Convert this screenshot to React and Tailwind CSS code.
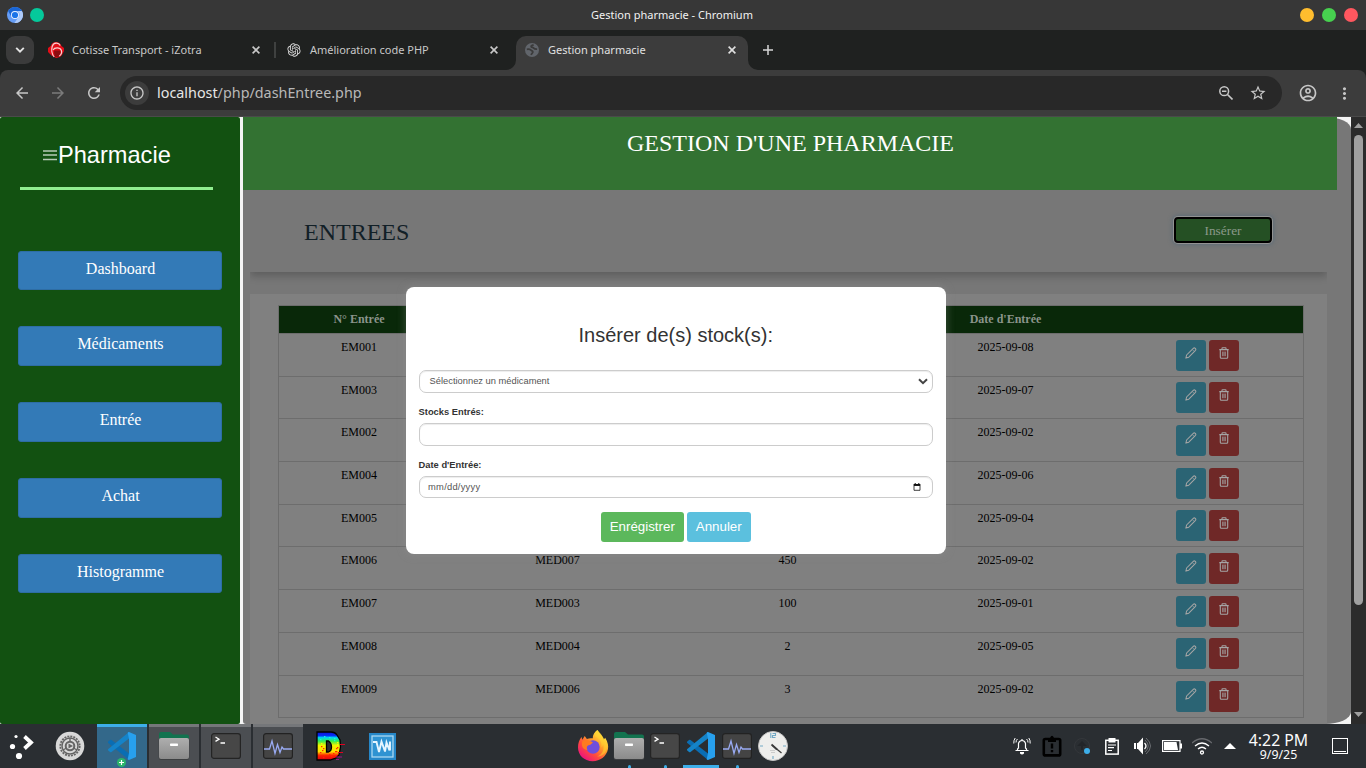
import React from "react";
import {
  MdArrowBack, MdArrowForward, MdRefresh, MdInfoOutline, MdStarBorder,
  MdOutlineAccountCircle, MdMoreVert,
} from "react-icons/md";
import { RiOpenaiFill } from "react-icons/ri";

const sans = "font-['Liberation_Sans',sans-serif]";
const serif = "font-['Liberation_Serif',serif]";

function ChromiumIcon() {
  return (
    <svg width="16" height="16" viewBox="0 0 16 16">
      <circle cx="8" cy="8" r="8" fill="#669df6" />
      <path d="M1.1 4A8 8 0 0 1 14.9 4H8a4 4 0 0 0-3.8 2.8L4 9Z" fill="#1a66d6" />
      <path d="M14.9 4A8 8 0 0 1 7.5 16l4-6A4 4 0 0 0 10.500 4Z" fill="#aecbfa" />
      <circle cx="8" cy="8" r="4" fill="#e8f0fe" />
      <circle cx="8" cy="8" r="3.1" fill="#1a73e8" />
    </svg>
  );
}

function CotisseIcon() {
  return (
    <svg width="16" height="16" viewBox="0 0 16 16">
      <path d="M8 0C5.500 0 3.500 1.500 2.700 4L0 6v4l3.500 3.500L8 16c3-.3 5.500-1.500 6.200-3.500L16 9V6l-2.500-2C12.500 1.500 10.500 0 8 0Z" fill="#e30d17" />
      <path d="M6 8.500h6.500v4L10 15H6.500Z" fill="#8c0c10" />
      <path d="M12.200 3.500C10.500 0 5.500.3 4.200 4.500c-.9 3.500-.4 7.500 2 10.500" fill="none" stroke="#f8cfcf" strokeWidth="1.200" />
      <path d="M5 8c1.500-2.800 7-3 8.300.3.900 2.500-.3 4.500-2 5.700" fill="none" stroke="#f8cfcf" strokeWidth="1.200" />
    </svg>
  );
}

function GlobeIcon() {
  return (
    <svg width="14" height="14" viewBox="0 0 14 14">
      <circle cx="7" cy="7" r="7" fill="#61656b" />
      <path d="M1.800 6.300c2-.3 3.200-.1 4.200.9.900.9 1.700.5 1.900 1.600.1 1.300-1.300 1.500-1.900 3.100M8.600 1.600C7.500 2.600 6 2.300 6.100 3.600c.2 1.100 1.600.5 2.300 1.300.8.900 1.800 1.300 3.700 1.200" fill="none" stroke="#3b3b3b" strokeWidth="1.700" />
    </svg>
  );
}

function Cross({ className }) {
  return (
    <svg width="8" height="8" viewBox="0 0 8 8" className={className}>
      <path d="m.6.6 6.800 6.800M7.400.6.6 7.400" stroke="currentColor" strokeWidth="1.600" />
    </svg>
  );
}

function TitleBar() {
  return (
    <div className="flex h-[30px] items-center bg-[#373737] px-[7px]">
      <div className="flex w-[98px] items-center gap-[7px]">
        <ChromiumIcon />
        <div className="size-3.5 rounded-full bg-[#05c99b]" />
      </div>
      <div className="flex-1 text-center text-[11px] text-[#f2f2f2]">Gestion pharmacie - Chromium</div>
      <div className="flex w-[120px] justify-end gap-2 pr-px">
        <div className="size-3.5 rounded-full bg-[#ffbd2e]" />
        <div className="size-3.5 rounded-full bg-[#47d14f]" />
        <div className="size-3.5 rounded-full bg-[#ff575f]" />
      </div>
    </div>
  );
}

function Tabs() {
  return (
    <div className="flex h-10 bg-[#1f2120] text-[11px] text-[#c8c8c8]">
      <div className="mt-1.5 ml-1.5 flex size-7 items-center justify-center rounded-[9px] bg-[#3b3b3b] text-[#e3e3e3]">
        <svg width="10" height="6" viewBox="0 0 10 6"><path d="m1.200.8 3.800 3.800L8.800.8" fill="none" stroke="currentColor" strokeWidth="1.900" /></svg>
      </div>
      <div className="ml-3.5 flex w-[226px] items-center">
        <CotisseIcon />
        <span className="ml-2 flex-1">Cotisse Transport - iZotra</span>
        <Cross className="mr-3.5" />
      </div>
      <div className="mt-3 h-4 w-0.5 bg-[#3f4140]" />
      <div className="flex w-[241px] items-center pl-2.5">
        <RiOpenaiFill size={16} className="text-[#dedede]" />
        <span className="ml-2 flex-1">Amélioration code PHP</span>
        <Cross className="mr-[19px]" />
      </div>
      <div className="mt-1.5 -ml-[11px] flex">
        <svg width="10" height="34" viewBox="0 0 10 34"><path d="M0 34a10 10 0 0 0 10-10V34Z" fill="#3c3c3c" /></svg>
        <div className="flex h-[34px] w-[232px] items-center rounded-t-[10px] bg-[#3c3c3c] pb-1.5 pl-[9px] text-[#e0e0e0]">
          <GlobeIcon />
          <span className="ml-[9px] flex-1">Gestion pharmacie</span>
          <Cross className="mr-3" />
        </div>
        <svg width="10" height="34" viewBox="0 0 10 34"><path d="M10 34A10 10 0 0 1 0 24V34Z" fill="#3c3c3c" /></svg>
      </div>
      <div className="flex items-center pl-[5px] text-[#d6d6d6]">
        <svg width="10" height="10" viewBox="0 0 10 10"><path d="M5 0v10M0 5h10" stroke="currentColor" strokeWidth="1.500" /></svg>
      </div>
    </div>
  );
}

function Toolbar() {
  return (
    <div className="bg-[#1f2120]">
      <div className="flex h-[47px] items-start rounded-t-[8px] border-b border-[#4a4a4a] bg-[#3c3c3c] pt-1.5 text-[#c7c7c7]">
        <div className="ml-[13px] flex h-[34px] items-center gap-[18px]">
          <MdArrowBack size={18} />
          <MdArrowForward size={18} className="text-[#7b7b7b]" />
          <MdRefresh size={18} />
        </div>
        <div className="ml-[17px] flex h-[34px] w-[1162px] items-center rounded-full bg-[#282828] pr-[15px] pl-[5px]">
          <div className="flex size-6 items-center justify-center rounded-full bg-[#3c3c3c]">
            <MdInfoOutline size={16} />
          </div>
          <div className="ml-2 flex-1 pb-px text-[14.35px] text-[#b8b8b8]"><span className="text-[#e6e6e6]">localhost</span>/php/dashEntree.php</div>
          <svg width="14" height="14" viewBox="0 0 14 14" className="mr-4"><circle cx="5.200" cy="5.200" r="4.400" fill="none" stroke="currentColor" strokeWidth="1.500" /><path d="m8.500 8.500 5 5M3 5.200h4.400" stroke="currentColor" strokeWidth="1.600" /></svg>
          <MdStarBorder size={18} />
        </div>
        <div className="ml-4 flex h-[34px] items-center gap-[17px]">
          <MdOutlineAccountCircle size={20} />
          <MdMoreVert size={19} />
        </div>
      </div>
    </div>
  );
}

const nav = ["Dashboard", "Médicaments", "Entrée", "Achat", "Histogramme"];

function Sidebar() {
  return (
    <aside className="h-full w-[240px] shrink-0 rounded-[2px] bg-[#125111] pt-5 text-white">
      <div className={"ml-5 flex h-[53px] w-[193px] items-start border-b-[3px] border-[#90ee90] pl-[23px] " + sans}>
        <svg width="14" height="12" viewBox="0 0 14 12" className="mt-[12px]"><path d="M0 2h14M0 6h14M0 10.500h14" stroke="#b6cbb6" strokeWidth="1.700" /></svg>
        <span className="ml-px text-[23.6px] leading-9">Pharmacie</span>
      </div>
      <nav className={"mt-[60.600px] flex flex-col items-center gap-[36.6px] text-[16px] " + serif}>
        {nav.map((n) => (
          <div key={n} className="flex h-[39.3px] w-[204px] justify-center rounded-[3px] border border-[#2e6da4] bg-[#337ab7] pl-px leading-[34.7px]">{n}</div>
        ))}
      </nav>
    </aside>
  );
}

const rows = [
  ["EM001", "", "", "2025-09-08"],
  ["EM003", "", "", "2025-09-07"],
  ["EM002", "", "", "2025-09-02"],
  ["EM004", "", "", "2025-09-06"],
  ["EM005", "", "", "2025-09-04"],
  ["EM006", "MED007", "450", "2025-09-02"],
  ["EM007", "MED003", "100", "2025-09-01"],
  ["EM008", "MED004", "2", "2025-09-05"],
  ["EM009", "MED006", "3", "2025-09-02"],
];
const cols = "grid grid-cols-[160px_237px_223px_213px_1fr]";

function Pencil() {
  return (
    <svg width="12" height="12" viewBox="0 0 12 12" fill="none" stroke="currentColor" strokeWidth="1.050" strokeLinejoin="round">
      <path d="M.9 11.100 1.600 8 8.300 1.300q1-.9 2 0 1 1 .2 2L3.800 10.200Z" />
      <path d="m7.500 2.700 1.800 1.800" strokeWidth=".7" />
    </svg>
  );
}

function Trash() {
  return (
    <svg width="10" height="12" viewBox="0 0 10 12" fill="none" stroke="currentColor" strokeWidth="1.100">
      <path d="M.3 2.600h9.400M3 2.400V1.300Q3 .7 3.600.7h2.800q.6 0 .6.600v1.100M1.300 2.600v7.600q0 1 1 1h5.400q1 0 1-1V2.600" />
      <path d="M3.700 4.600v4.600M5 4.600v4.600M6.300 4.600v4.600" strokeWidth=".8" />
    </svg>
  );
}

function StockTable() {
  return (
    <div className="h-[430px] w-[1077px] bg-[#808080] px-7 pt-[11px]">
      <div className="w-[1026px] border border-b-0 border-[#6d6d6d] text-center text-[12px]">
        <div className={cols + " h-[28px] border-b border-[#6d6d6d] bg-[#092809] leading-[27px] font-bold text-[#8b948b]"}>
          <div>N° Entrée</div>
          <div />
          <div />
          <div>Date d'Entrée</div>
          <div />
        </div>
        {rows.map((r) => (
          <div key={r[0]} className={cols + " h-[42.7px] border-b border-[#6d6d6d] leading-[27.6px] text-black"}>
            {r.map((c, i) => <div key={i}>{c}</div>)}
            <div className="flex justify-center gap-[3px] pt-[5.5px] text-[#a5a5a5]">
              <div className="flex h-[31px] w-[30px] justify-center rounded-[3px] bg-[#2b6474] pt-[7px]"><Pencil /></div>
              <div className="flex h-[31px] w-[30px] justify-center rounded-[3px] bg-[#6f2827] pt-[7px]"><Trash /></div>
            </div>
          </div>
        ))}
      </div>
    </div>
  );
}

function Modal() {
  const field = "w-full rounded-[7px] border border-[#ccc] bg-white text-[9.33px] text-[#555] shadow-[inset_0_1px_1px_rgba(0,0,0,0.075)]";
  return (
    <div className={"absolute top-[170.300px] left-[405.600px] h-[266.700px] w-[540.300px] rounded-[8px] bg-white px-[13px] pt-[35px] text-[#333] shadow-[0_0_10px_rgba(150,150,150,0.4)] " + sans}>
      <h3 className="text-center text-[20px] leading-[26px]">Insérer de(s) stock(s):</h3>
      <div className={field + " mt-[22px] flex h-[23px] items-center justify-between pr-1 pl-2.5"}>
        <span className="pt-px">Sélectionnez un médicament</span>
        <svg width="10" height="7" viewBox="0 0 10 7"><path d="M1 1.200 5 5.200 9 1.200" fill="none" stroke="#444" strokeWidth="2" /></svg>
      </div>
      <div className="mt-[11px] text-[9.33px] leading-4 font-bold">Stocks Entrés:</div>
      <div className={field + " mt-[3px] h-[23px]"} />
      <div className="mt-[11px] text-[9.33px] leading-4 font-bold">Date d'Entrée:</div>
      <div className={field + " mt-[3px] flex h-[22px] items-center justify-between pr-[11px] pl-[8.500px]"}>
        <span className="pt-px tracking-[0.25px]">mm/dd/yyyy</span>
        <svg width="8" height="8" viewBox="0 0 8 8"><path d="M1 2.500h6v4.800H1Z" fill="none" stroke="#111" strokeWidth=".8" /><path d="M.6 1h6.800v1.700H.6ZM1.700 0h1v1h-1ZM5.300 0h1v1h-1Z" fill="#111" /></svg>
      </div>
      <div className="mt-3.5 flex justify-center gap-[3px] text-[13.33px] leading-[29px] text-white">
        <div className="h-[29.300px] w-[83px] rounded-[3px] bg-[#5cb85c] text-center">Enrégistrer</div>
        <div className="h-[29.300px] w-[64px] rounded-[3px] bg-[#5bc0de] text-center">Annuler</div>
      </div>
    </div>
  );
}

function Page() {
  return (
    <div className={"relative flex h-[607px] overflow-hidden bg-[#f4f4f4] " + serif}>
      <Sidebar />
      <main className="ml-[3px] h-full w-[1108px] rounded-tl-[3px] rounded-tr-[26px_12px] rounded-br-[26px_12px] rounded-bl-[3px] bg-[#777]">
        <header className="h-[73px] w-[1094px] bg-[#337232] pt-[8px] pl-px text-center text-[24px] leading-[36px] text-white">GESTION D'UNE PHARMACIE</header>
        <div className="ml-[7px] w-[1077px]">
          <div className="h-[104px] overflow-hidden">
            <div className="flex h-[82px] items-start justify-between bg-[#777] pr-[55px] pl-[54px] shadow-[0_4px_8px_rgba(0,0,0,0.22)]">
              <h2 className="pt-[24px] text-[24px] leading-9 text-[#122027]">ENTREES</h2>
              <div className="mt-[27px] flex h-[25.500px] w-[98px] items-center justify-center rounded-[4px] border-2 border-black bg-[#255024] pt-0.5 text-[13.33px] text-[#8a998a] shadow-[0_0_0_1px_#929292,0_0_5px_1px_#526878]">Insérer</div>
            </div>
          </div>
          <StockTable />
        </div>
      </main>
      <div className="flex h-full w-[15px] flex-col items-center bg-[#2b2b2b] pt-1.5">
        <svg width="9" height="5" viewBox="0 0 9 5"><path d="M0 5 4.500 0 9 5Z" fill="#9f9f9f" /></svg>
        <div className="mt-[7px] h-[470px] w-[9px] rounded-full bg-[#9f9f9f]" />
        <svg width="9" height="5" viewBox="0 0 9 5" className="mt-[107px] shrink-0"><path d="M0 0 4.500 5 9 0Z" fill="#9f9f9f" /></svg>
      </div>
      <Modal />
    </div>
  );
}

function VSCode() {
  return (
    <svg width="28" height="28" viewBox="0 0 28 28">
      <path d="M0 9.800 2 8q.8-.5 1.500 0L21 21.500V28L.3 11Q-.3 10.500 0 9.800Z" fill="#0a6db3" />
      <path d="M0 18.200 2 20q.8.500 1.500 0L21 6.500V0L.3 17q-.6.500-.3 1.200Z" fill="#1583c8" />
      <path d="M21 0 28 3V25l-7 3q-1 0-1.300-.8L21 21V7L19.700.8Q20 0 21 0Z" fill="#27a0ee" />
    </svg>
  );
}

function Folder() {
  return (
    <svg width="32" height="28" viewBox="0 0 32 28">
      <defs><linearGradient id="fold" x1="0" y1="0" x2="0" y2="1"><stop offset="0" stopColor="#aeaeae" /><stop offset="1" stopColor="#8b8b8b" /></linearGradient></defs>
      <path d="M1 2q0-2 2-2h9l3 2.500h14q2 0 2 2V12H1Z" fill="#12734f" />
      <rect x=".7" y="6" width="30.600" height="22" rx="2.500" fill="#3d3f41" />
      <rect x="1" y="6" width="30" height="21" rx="2" fill="url(#fold)" />
      <rect x="12" y="11.500" width="8" height="2.500" rx=".7" fill="#fff" />
    </svg>
  );
}

function Terminal() {
  return (
    <svg width="30" height="26" viewBox="0 0 30 26">
      <rect x=".6" y=".6" width="28.800" height="24.800" rx="2.500" fill="#474747" stroke="#242424" strokeWidth="1.200" />
      <path d="M4.500 4 8 6.200 4.500 8.400M9.500 10h4.500" fill="none" stroke="#fff" strokeWidth="1.300" />
    </svg>
  );
}

function Monitor() {
  return (
    <svg width="30" height="26" viewBox="0 0 30 26">
      <rect x=".6" y=".6" width="28.800" height="24.800" rx="2.500" fill="#444" stroke="#222" strokeWidth="1.200" />
      <path d="M1 16h5.500l2.500-8 3 12.500 2.500-9 2.500 8 2-5.500 1.500 2H29" fill="none" stroke="#99aaf2" strokeWidth="1.300" />
    </svg>
  );
}

function Gear() {
  return (
    <svg width="30" height="30" viewBox="0 0 30 30">
      <circle cx="15" cy="15" r="14.300" fill="#d8d8d8" />
      <circle cx="15" cy="15" r="9.700" fill="none" stroke="#646464" strokeWidth="1.800" strokeDasharray="2 1.050" />
      <circle cx="15" cy="15" r="8" fill="none" stroke="#646464" strokeWidth="1.500" />
      <circle cx="15" cy="15" r="4.300" fill="#d8d8d8" stroke="#646464" strokeWidth="2" />
      <path d="m13.500 12.500 4.500 2.500-4.500 2.500Z" fill="#646464" />
      <path d="m15 7 0 4M8 19l3.500-2M22 19l-3.500-2" stroke="#646464" strokeWidth="1.400" />
    </svg>
  );
}

function DIcon() {
  const spots = [[4,8],[8,5],[13,6],[18,9],[21,13],[5,12],[7,17],[20,17],[4,21],[17,22],[20,20],[8,24],[13,23],[18,7],[5,15],[21,11],[6,19],[19,20],[21,16],[15,25],[7,26],[3,24]];
  return (
    <svg width="30" height="30" viewBox="0 0 30 30">
      <defs><linearGradient id="rainbow" x1="0" y1="0" x2="0" y2="1"><stop offset="0" stopColor="#1010d8" /><stop offset=".13" stopColor="#0530f5" /><stop offset=".2" stopColor="#00d7f5" /><stop offset=".32" stopColor="#30ed55" /><stop offset=".48" stopColor="#f3f500" /><stop offset=".7" stopColor="#ffe000" /><stop offset=".83" stopColor="#ff2600" /><stop offset="1" stopColor="#e00010" /></linearGradient></defs>
      <path fillRule="evenodd" d="M1 1h14q4 0 6 3l3 5 .5 7-1.500 8-3 3-6 2H1ZM10.500 10v11h2q3-1 3-5t-3-6Z" fill="url(#rainbow)" stroke="#000" strokeWidth="1.300" />
      {spots.map(([x, y], i) => <rect key={i} x={x} y={y} width="1.400" height="1.200" fill={y < 10 ? "#19ffd2" : y < 15 ? "#f9ff00" : "#ff2a00"} />)}
      <path d="M24 13.500h5M22 21.500h5" stroke="#e00020" />
      <path d="M20 26h6M20 28.500h3" stroke="#9c108c" strokeWidth="1.200" />
    </svg>
  );
}

function WIcon() {
  return (
    <svg width="27" height="27" viewBox="0 0 27 27">
      <rect width="27" height="27" fill="#2687c8" />
      <rect x="3" y="3" width="21" height="21" fill="#2f93d2" stroke="#a9d8f2" strokeWidth="1.300" />
      <path d="M4 9h3.500l2.500 10 2.500-10.500 3.500 10 1.500-9 3 8 .5-9v9" fill="none" stroke="#e6f5ff" strokeWidth="1.900" />
    </svg>
  );
}

function Firefox() {
  return (
    <svg width="32" height="32" viewBox="0 0 32 32">
      <defs>
        <linearGradient id="ff" x1=".85" y1=".1" x2=".2" y2=".9"><stop offset="0" stopColor="#fff04a" /><stop offset=".4" stopColor="#ff9a28" /><stop offset=".7" stopColor="#ff4b3e" /><stop offset="1" stopColor="#ee1778" /></linearGradient>
      </defs>
      <path d="M20.500 0c2 4 5 5 6.300 9.500l1.400-1.800C31 12 31.500 16 31 19c-1.500 7.500-8 12.200-15.300 12.200C7 31.200 1 25 1 17.500 1 13 2.200 10 4.500 7l.8 2.800L7.700 6l2.200 3c2-1 4-.9 6-.7C15.500 5.500 17.500 2 20.500 0Z" fill="url(#ff)" />
      <circle cx="16" cy="17" r="6.700" fill="#704edb" />
      <path d="M5.500 11c4-2 7-.5 10.500 1.500l-3 2.500c-3 0-4 2.500-2.500 5-4 0-7-4-5-9Z" fill="#ff7b20" />
      <path d="M18 6.500c5 1.500 7 6 6.500 11 1-1 1.500-2.500 1.500-4 2 6-1 11.500-6 13 7 0 11-6 10-13L24 4l-3.500-4C17 2.500 17 4.500 18 6.500Z" fill="#ffd52e" opacity=".55" />
    </svg>
  );
}

function Clock() {
  return (
    <svg width="30" height="30" viewBox="0 0 30 30">
      <circle cx="15" cy="15" r="14.500" fill="#eeeeec" stroke="#c4c4c4" />
      <path d="M15 25v3M2 15h3M25 15h3M12.800 2v5M14.500 2.500h3v2h-3v2h3" fill="none" stroke="#72a9c5" strokeWidth="1.100" />
      <path d="m14.500 14.500 9 7.500" stroke="#3b3b3b" strokeWidth="1.300" />
      <path d="m13.500 13.500 5.500 5" stroke="#3b3b3b" strokeWidth="1.800" />
      <path d="M12 19.500h5M13 21.500h4" stroke="#ccc" />
    </svg>
  );
}

function Task({ children, active }) {
  return (
    <div className={active ? "relative flex h-full w-[50px] items-center justify-center border-t-[3px] border-[#3daee9] bg-[#33688a] pb-[3px]" : "flex h-full w-[50px] items-center justify-center border-t-[3px] border-[#75777a] bg-[#4b4e52] pb-[3px]"}>
      {children}
    </div>
  );
}

function Dock({ children, dot, wide }) {
  return (
    <div className="flex h-full w-9 flex-col items-center">
      <div className="flex h-[41px] items-center justify-center pt-[3px]">{children}</div>
      {dot && <div className="h-[3px] w-[3px] rounded-t-full bg-[#3daee9]" />}
      {wide && <div className="h-[3px] w-9 bg-[#3daee9]" />}
    </div>
  );
}

function TrayIcons() {
  const box = "flex w-[30px] items-center justify-center";
  return (
    <div className="flex items-center">
      <div className={box}>
        <svg width="18" height="18" viewBox="0 0 18 18" fill="none" stroke="#fff" strokeWidth="1.200"><path d="M2.500 13.500h13M4.500 13.500V12l1-1V6.500Q6 3.500 9 3.500t3.500 3V11l1 1v1.500M9 3.500V2" /><path d="M7 15h4v1.500q-2 2-4 0Z" fill="#fff" stroke="none" /><path d="M4.500 2Q3 3 3 5.500M2.200 1Q.6 3 .8 6.500M13.500 2Q15 3 15 5.500M15.800 1q1.600 2 1.400 5.500" strokeWidth="1" /></svg>
      </div>
      <div className={box}>
        <svg width="20" height="22" viewBox="0 0 20 22"><rect x="1.800" y="4" width="16.400" height="16.400" rx="1.500" fill="none" stroke="#000" strokeWidth="2.600" /><path d="M6 3h2q2-4.500 4 0h2v4H6Z" fill="#000" /><path d="M10 8.500v5M10 15v2.300" stroke="#000" strokeWidth="2.400" /></svg>
      </div>
      <div className={box}>
        <svg width="18" height="18" viewBox="0 0 18 18"><circle cx="9" cy="9" r="7.500" fill="none" stroke="#34373b" /><path d="M9 13V7M6.500 8 9 5.500 11.500 8Z" stroke="#222529" strokeWidth="2" fill="#222529" /><circle cx="14" cy="14" r="3" fill="#3daee9" /></svg>
      </div>
      <div className={box}>
        <svg width="14" height="17" viewBox="0 0 14 17"><rect x=".8" y="2.300" width="12.400" height="13.800" fill="none" stroke="#fff" strokeWidth="1.500" /><path d="M3.500 0h7v4.500h-7Z" fill="#fff" /><path d="M3 7h8M3 9.700h6M3 12.500h4" stroke="#fff" strokeWidth="1.200" /></svg>
      </div>
      <div className={box}>
        <svg width="17" height="18" viewBox="0 0 17 18"><path d="M0 6h2v6H0ZM3 6h1l5-5.500v17L4 12H3Z" fill="#fff" /><path d="M10.500 6q3 3 0 6" stroke="#fff" strokeWidth="1.300" fill="none" /><path d="M11 3q6.500 6 0 12M12 1q9 8 0 16" stroke="#6c6f73" fill="none" /></svg>
      </div>
      <div className={box}>
        <svg width="20" height="12" viewBox="0 0 20 12"><rect x=".6" y=".6" width="17.400" height="10.800" fill="none" stroke="#fff" strokeWidth="1.200" /><path d="M2 2h12.500l1.500 8H2Z" fill="#fff" /><path d="M18 3.500h2v5h-2Z" fill="#fff" /></svg>
      </div>
      <div className={box}>
        <svg width="20" height="17" viewBox="0 0 20 17" fill="none" strokeWidth="1.300"><path d="M0 5q10-8.500 20 0" stroke="#67696d" /><path d="M3 8q7-6 14 0M6 11q4-3.500 8 0" stroke="#fff" /><circle cx="10" cy="14.500" r="1.500" stroke="#fff" /></svg>
      </div>
      <div className="flex w-[26px] justify-center"><svg width="12" height="6" viewBox="0 0 12 6"><path d="M0 6 6 0l6 6Z" fill="#fff" /></svg></div>
    </div>
  );
}

function Taskbar() {
  return (
    <div className="flex h-11 items-center bg-[#2a2e32]">
      <div className="flex h-full w-[577px] items-center">
        <div className="w-[55px] pl-[9px]">
          <svg width="26" height="27" viewBox="0 0 26 27"><circle cx="7" cy="3.500" r="1.600" fill="#fff" /><circle cx="3.500" cy="13.500" r="2.600" fill="#fff" /><circle cx="10" cy="23" r="3.100" fill="#fff" /><path d="m15.500 3.500 6.500 6-6.500 6" stroke="#fff" strokeWidth="3.800" fill="none" /></svg>
        </div>
        <Gear />
        <div className="ml-3 flex h-full gap-0.5">
          <Task active>
            <VSCode />
            <svg width="9" height="9" viewBox="0 0 9 9" className="absolute bottom-px left-5"><circle cx="4.500" cy="4.500" r="4.500" fill="#2ab46b" /><path d="M4.500 2v5M2 4.500h5" stroke="#fff" strokeWidth="1.200" /></svg>
          </Task>
          <Task><Folder /></Task>
          <Task><Terminal /></Task>
          <Task><Monitor /></Task>
        </div>
        <div className="ml-[13px]"><DIcon /></div>
        <div className="ml-[23px]"><WIcon /></div>
      </div>
      <div className="-ml-0.5 mr-0.5 flex h-full w-[430px]">
        <Dock><Firefox /></Dock>
        <Dock dot><Folder /></Dock>
        <Dock dot><Terminal /></Dock>
        <Dock wide><VSCode /></Dock>
        <Dock dot><Monitor /></Dock>
        <Dock><Clock /></Dock>
      </div>
      <TrayIcons />
      <div className="flex w-[71px] flex-col items-center pt-px text-[#fcfcfc]">
        <div className="text-[15.8px] leading-[17px]">4:22 PM</div>
        <div className="text-[12.4px] leading-[12px]">9/9/25</div>
      </div>
      <svg width="16" height="16" viewBox="0 0 16 16" className="ml-[18px]"><rect x=".5" y=".5" width="15" height="15" fill="none" stroke="#fff" /><path d="M2 13.500h12" stroke="#fff" strokeWidth="1" /></svg>
    </div>
  );
}

export default function App() {
  return (
    <div className="h-[768px] w-[1366px] overflow-hidden bg-[#2a2e32] font-['Noto_Sans',sans-serif]">
      <TitleBar />
      <Tabs />
      <Toolbar />
      <Page />
      <Taskbar />
    </div>
  );
}
